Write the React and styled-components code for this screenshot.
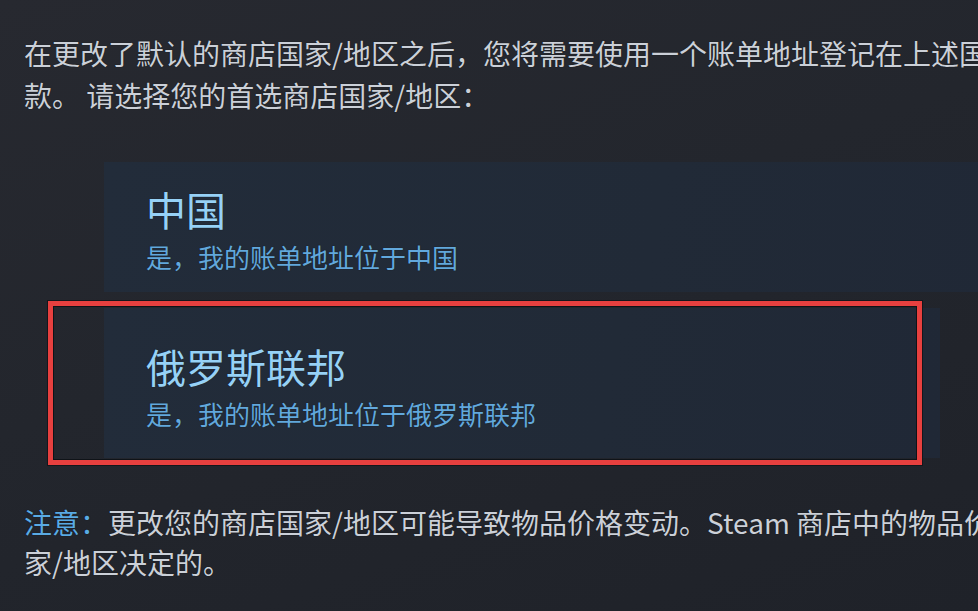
import React from "react";
import styled, { createGlobalStyle } from "styled-components";

const Global = createGlobalStyle`
  html, body {
    margin: 0;
    padding: 0;
    width: 978px;
    height: 611px;
    overflow: hidden;
    background: #24262d;
  }
  body {
    font-family: "Noto Sans CJK SC", "Noto Sans", sans-serif;
  }
`;

const Page = styled.div`
  width: 978px;
  height: 611px;
  overflow: hidden;
  box-sizing: border-box;
  padding-top: 32px;
  background: linear-gradient(160deg, #272930 0%, #23262d 45%, #1f2229 100%);
  display: flex;
  flex-direction: column;
`;

const Para = styled.div`
  padding-left: 24px;
  font-size: ${(p) => p.$size}px;
  line-height: ${(p) => p.$lh}px;
  color: #cbd0d8;
  text-shadow: 0 0 1px rgba(0, 0, 0, 0.7);
`;

const Line = styled.div`
  white-space: nowrap;
`;

const Highlight = styled.span`
  color: #5aabe4;
`;

const CardList = styled.div`
  position: relative;
  margin-top: 46px;
  margin-bottom: 44px;
  display: flex;
  flex-direction: column;
  gap: 16px;
  padding-left: 104px;
`;

const Card = styled.div`
  box-sizing: border-box;
  height: ${(p) => p.$h}px;
  margin-right: ${(p) => p.$mr}px;
  padding: ${(p) => p.$pt}px 0 0 42px;
  background: linear-gradient(100deg, #222c3a 0%, #212a37 60%, #202836 100%);
  display: flex;
  flex-direction: column;
`;

const Title = styled.div`
  font-size: 40px;
  line-height: 48px;
  color: #96d1f6;
  text-shadow: 0 0 1px rgba(0, 0, 0, 0.6);
`;

const Sub = styled.div`
  margin-top: 7px;
  font-size: 26px;
  line-height: 34px;
  color: #62a8dc;
  text-shadow: 0 0 1px rgba(0, 0, 0, 0.6);
`;

const Annotation = styled.div`
  position: absolute;
  left: 48px;
  top: 139px;
  width: 874px;
  height: 164px;
  box-sizing: border-box;
  border: 5px solid #e7403f;
  box-shadow: inset 0 0 0 1px #0f1318, 0 0 0 1px #14171c;
  pointer-events: none;
`;

export default function App() {
  return (
    <>
      <Global />
      <Page>
        <Para $size={28} $lh={42}>
          <Line>
            在更改了默认的商店国家/地区之后，您将需要使用一个账单地址登记在上述国家/地区的付款方式付
          </Line>
          <Line>款。 请选择您的首选商店国家/地区：</Line>
        </Para>
        <CardList>
          <Card $h={130} $pt={23} $mr={-40}>
            <Title>中国</Title>
            <Sub>是，我的账单地址位于中国</Sub>
          </Card>
          <Card $h={150} $pt={34} $mr={38}>
            <Title>俄罗斯联邦</Title>
            <Sub>是，我的账单地址位于俄罗斯联邦</Sub>
          </Card>
          <Annotation />
        </CardList>
        <Para $size={28} $lh={40}>
          <Line>
            <Highlight>注意：</Highlight>更改您的商店国家/地区可能导致物品价格变动。Steam 商店中的物品价格是根据您的商店国
          </Line>
          <Line>家/地区决定的。</Line>
        </Para>
      </Page>
    </>
  );
}
